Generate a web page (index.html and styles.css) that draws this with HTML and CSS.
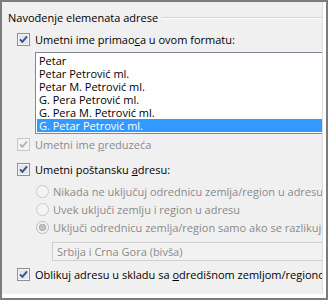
FILE: index.html
```html
<html lang="sr">

<head>
    <meta charset="UTF-8">
    <title>Navođenje elemenata adrese</title>
    <link rel="stylesheet" href="styles.css">
</head>

<body>
    <div class="frame">
        <div class="panel">
            <div class="head">
                <span>Navođenje elemenata adrese</span>
                <i class="rule"></i>
            </div>

            <div class="row first">
                <svg class="box" width="13" height="13" viewBox="0 0 13 13">
                    <rect x="0.5" y="0.5" width="12" height="12" fill="#f6f6f6" stroke="#8e8f8f" />
                    <rect x="2" y="2" width="9" height="9" fill="#e3e6ef" />
                    <path d="M3 6.3 L5.4 8.8 L10 3.4" fill="none" stroke="#3d4e8a" stroke-width="1.9" />
                </svg>
                <span>Umetni ime primao<u>c</u>a u ovom formatu:</span>
            </div>

            <div class="list">
                <div>Petar</div>
                <div>Petar Petrović ml.</div>
                <div>Petar M. Petrović ml.</div>
                <div>G. Pera Petrović ml.</div>
                <div>G. Pera M. Petrović ml.</div>
                <div class="selected">G. Petar Petrović ml.</div>
            </div>

            <div class="row off company">
                <svg class="box" width="13" height="13" viewBox="0 0 13 13">
                    <rect x="0.5" y="0.5" width="12" height="12" fill="#f4f4f4" stroke="#c6c6c6" />
                    <path d="M3 6.3 L5.4 8.8 L10 3.4" fill="none" stroke="#b4b4b4" stroke-width="1.9" />
                </svg>
                <span>Umetni ime <u>p</u>reduzeća</span>
            </div>

            <div class="row postal">
                <svg class="box" width="13" height="13" viewBox="0 0 13 13">
                    <rect x="0.5" y="0.5" width="12" height="12" fill="#f6f6f6" stroke="#8e8f8f" />
                    <rect x="2" y="2" width="9" height="9" fill="#e3e6ef" />
                    <path d="M3 6.3 L5.4 8.8 L10 3.4" fill="none" stroke="#3d4e8a" stroke-width="1.9" />
                </svg>
                <span>Umetni poštansku <u>a</u>dresu:</span>
            </div>

            <div class="radios">
                <div class="row off">
                    <svg class="dot" width="13" height="13" viewBox="0 0 13 13">
                        <circle cx="6.5" cy="6.5" r="6" fill="#f4f4f4" stroke="#c9c9c9" />
                    </svg>
                    <span>Nikada ne uključuj odrednicu zemlja/region u adresu</span>
                </div>
                <div class="row off">
                    <svg class="dot" width="13" height="13" viewBox="0 0 13 13">
                        <circle cx="6.5" cy="6.5" r="6" fill="#f4f4f4" stroke="#c9c9c9" />
                    </svg>
                    <span>Uvek uključi zemlju i region u adresu</span>
                </div>
                <div class="row off">
                    <svg class="dot" width="13" height="13" viewBox="0 0 13 13">
                        <circle cx="6.5" cy="6.5" r="6" fill="#f4f4f4" stroke="#b9b9b9" />
                        <circle cx="6.5" cy="6.5" r="3.2" fill="#c2c2c2" stroke="#a9a9a9" />
                    </svg>
                    <span>Uključi odrednicu zemlja/region samo ako se razlikuje</span>
                </div>
            </div>

            <div class="combo">Srbija i Crna Gora (bivša)</div>

            <div class="row last">
                <svg class="box" width="13" height="13" viewBox="0 0 13 13">
                    <rect x="0.5" y="0.5" width="12" height="12" fill="#f6f6f6" stroke="#8e8f8f" />
                    <rect x="2" y="2" width="9" height="9" fill="#e3e6ef" />
                    <path d="M3 6.3 L5.4 8.8 L10 3.4" fill="none" stroke="#3d4e8a" stroke-width="1.9" />
                </svg>
                <span>Oblikuj adresu u skladu sa <u>o</u>dredišnom zemljom/regionom</span>
            </div>
        </div>
    </div>
</body>

</html>
```

FILE: styles.css
```css
* {
    box-sizing: border-box;
    margin: 0;
    padding: 0;
}

body {
    width: 328px;
    height: 300px;
    font-family: "Open Sans", "Noto Sans", sans-serif;
    font-size: 11px;
    color: #000;
}

.frame {
    width: 328px;
    height: 300px;
    border: 2px solid #7c7c7c;
    background: #fff;
    padding: 0 3px 4px 0;
}

.panel {
    height: 100%;
    background: #f0f0f0;
    border-right: 1px solid #dedede;
    overflow: hidden;
    padding-top: 8px;
}

.head {
    display: flex;
    align-items: center;
    height: 15px;
    padding-left: 6px;
    white-space: nowrap;
}

.head .rule {
    flex: 1;
    margin-left: 4px;
    border-top: 1px solid #d5d5d5;
    border-bottom: 1px solid #fff;
}

.row {
    display: flex;
    align-items: center;
    height: 15px;
    padding-left: 15px;
    white-space: nowrap;
}

.row .box {
    flex: none;
    margin-right: 5px;
}

.row.first {
    margin-top: 7px;
}

.off {
    color: #8a8a8a;
}

.list {
    margin: 5px 0 0 33px;
    width: 310px;
    height: 82px;
    border: 1px solid #828790;
    background: #fff;
    padding: 1px 0 0 1px;
}

.list>div {
    height: 13px;
    line-height: 13px;
    padding-left: 2px;
    white-space: nowrap;
}

.list>.selected {
    background: #3399ff;
    color: #fff;
}

.company {
    margin-top: 3px;
}

.postal {
    margin-top: 10px;
}

.radios {
    margin-top: 7px;
    display: flex;
    flex-direction: column;
    gap: 3px;
}

.radios .row {
    padding-left: 34px;
}

.radios .dot {
    flex: none;
    margin-right: 4px;
}

.combo {
    margin: 7px 0 0 50px;
    width: 290px;
    height: 19px;
    line-height: 17px;
    border: 1px solid #cfcfcf;
    background: #f2f2f2;
    color: #8a8a8a;
    padding-left: 4px;
    white-space: nowrap;
}

.row.last {
    margin-top: 6px;
}
```
